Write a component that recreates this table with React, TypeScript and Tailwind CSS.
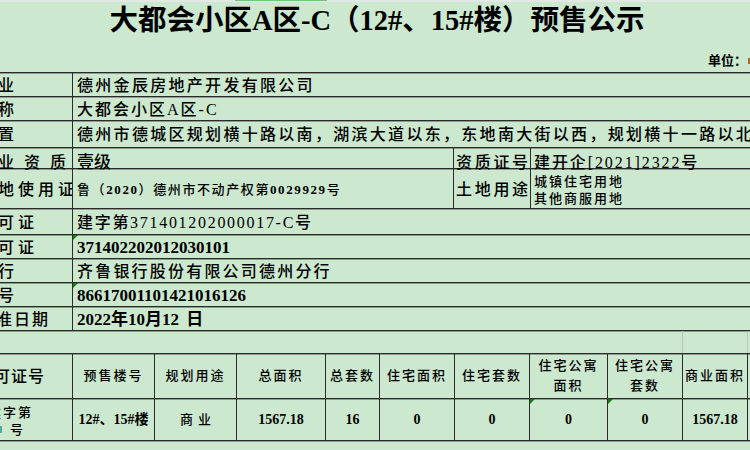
import type { ReactNode } from "react";

// light green sheet, dark rules with a grey line under each
const LINE = "border-t border-[#2b2b2b] shadow-[inset_0_1px_0_#8d9a8e]";

function Marker() {
  return (
    <span className="absolute left-0 top-0 w-0 h-0 border-t-[5px] border-r-[5px] border-t-[#137a13] border-r-transparent" />
  );
}

function InfoRow({
  h,
  label,
  labelCls,
  mark,
  children,
}: {
  h: string;
  label: string;
  labelCls: string;
  mark?: boolean;
  children: ReactNode;
}) {
  return (
    <div className={`flex ${LINE} ${h}`}>
      <div className="w-[72px] shrink-0 overflow-hidden flex items-center pt-[2px] text-[16px] whitespace-nowrap">
        <span className={labelCls}>{label}</span>
      </div>
      <div className="relative flex-1 min-w-0 flex items-center pt-[2px] pl-[4px] border-l border-[#2b2b2b] whitespace-nowrap overflow-hidden">
        {mark && <Marker />}
        {children}
      </div>
    </div>
  );
}

const headCell =
  "relative border-l border-[#2b2b2b] flex items-center justify-center text-center text-[13px] tracking-[2px] leading-[20px] font-medium";
const dataCell =
  "relative border-l border-[#2b2b2b] flex items-center justify-center text-[14px] font-bold";

export default function App() {
  return (
    <div className="w-[750px] h-[450px] overflow-hidden bg-[#cce8cf] text-black font-medium font-['Liberation_Serif','Noto_Sans_CJK_SC',serif]">
      <div className="h-[2px] bg-[#e3e8e4] flex">
        <div className="ml-[235px] w-[92px] h-px bg-[#79c27d]" />
      </div>

      <div className="h-[38px] flex items-center justify-center pl-[4px]">
        <h1 className="text-[28.5px] font-bold leading-none whitespace-nowrap">
          大都会小区A区-C（12#、15#楼）预售公示
        </h1>
      </div>

      <div className="h-[32px] flex items-center justify-end pt-[9px] text-[13px] font-bold">
        <span>单位：</span>
        <span className="ml-[1px] w-[2px] h-[6px] bg-[#b5651d]" />
      </div>

      <InfoRow h="h-[24px]" label="开发企业" labelCls="ml-[-56px] tracking-[2px]">
        <span className="text-[16px] tracking-[2.3px]">德州金辰房地产开发有限公司</span>
      </InfoRow>
      <InfoRow h="h-[24px]" label="项目名称" labelCls="ml-[-56px] tracking-[2px]">
        <span className="text-[16px] tracking-[2px]">大都会小区A区-C</span>
      </InfoRow>
      <InfoRow h="h-[27px]" label="项目位置" labelCls="ml-[-56px] tracking-[2px]">
        <span className="text-[16px] tracking-[2.3px]">
          德州市德城区规划横十路以南，湖滨大道以东，东地南大街以西，规划横十一路以北
        </span>
      </InfoRow>

      <div className={`grid grid-cols-[72px_381px_77px_1fr] h-[21px] ${LINE}`}>
        <div className="overflow-hidden flex items-center pt-[2px] text-[16px] whitespace-nowrap">
          <span className="ml-[-28px] tracking-[10px]">企业资质</span>
        </div>
        <div className="border-l border-[#2b2b2b] flex items-center pt-[2px] pl-[4px] text-[17px]">壹级</div>
        <div className="border-l border-[#2b2b2b] flex items-center pt-[2px] pl-[2px] text-[16px] tracking-[2.7px] whitespace-nowrap">
          资质证号
        </div>
        <div className="border-l border-[#2b2b2b] flex items-center pt-[2px] pl-[3px] text-[16px] tracking-[1.9px] whitespace-nowrap overflow-hidden">
          建开企[2021]2322号
        </div>
      </div>

      <div className={`grid grid-cols-[72px_381px_77px_1fr] h-[40px] ${LINE}`}>
        <div className="overflow-hidden flex items-center pt-[2px] text-[16px] whitespace-nowrap">
          <span className="ml-[-22px] tracking-[4px]">土地使用证</span>
        </div>
        <div className="border-l border-[#2b2b2b] flex items-center pt-[2px] pl-[4px] text-[13px] tracking-[1.6px] whitespace-nowrap">
          鲁（<b>2020</b>）德州市不动产权第<b>0029929</b>号
        </div>
        <div className="border-l border-[#2b2b2b] flex items-center pt-[3px] pl-[2px] text-[16px] tracking-[2.7px] whitespace-nowrap">
          土地用途
        </div>
        <div className="border-l border-[#2b2b2b] flex flex-col justify-center pt-[3px] pl-[3px] text-[13px] tracking-[2px] leading-[17px] whitespace-nowrap">
          <span>城镇住宅用地</span>
          <span>其他商服用地</span>
        </div>
      </div>

      <InfoRow h="h-[26px]" label="规划许可证" labelCls="ml-[-62px] tracking-[4px]">
        <span className="text-[16px] tracking-[1.7px]">建字第371401202000017-C号</span>
      </InfoRow>
      <InfoRow h="h-[24px]" label="施工许可证" labelCls="ml-[-62px] tracking-[4px]" mark>
        <span className="text-[17px] font-bold">371402202012030101</span>
      </InfoRow>
      <InfoRow h="h-[24px]" label="监管银行" labelCls="ml-[-56px] tracking-[2px]">
        <span className="text-[16px] tracking-[2.2px]">齐鲁银行股份有限公司德州分行</span>
      </InfoRow>
      <InfoRow h="h-[24px]" label="监管账号" labelCls="ml-[-56px] tracking-[2px]" mark>
        <span className="text-[17px] font-bold">86617001101421016126</span>
      </InfoRow>
      <InfoRow h="h-[24px]" label="批准日期" labelCls="ml-[-22px] tracking-[2px]">
        <span className="text-[17px] font-bold">
          2022年10月12 <span className="ml-[3px]">日</span>
        </span>
      </InfoRow>

      <div className={`grid grid-cols-[682px_65px_1fr] h-[23px] ${LINE}`}>
        <div />
        <div className="border-l border-[#b6c9b8]" />
        <div className="border-l border-[#b6c9b8]" />
      </div>

      <div className={`grid grid-cols-[72px_82px_82px_89px_54px_75px_75px_78px_75px_65px_1fr] h-[45px] ${LINE}`}>
        <div className="overflow-hidden flex items-center pt-[1px] text-[16px] whitespace-nowrap">
          <span className="ml-[-23px] tracking-[1px]">许可证号</span>
        </div>
        <div className={headCell}>预售楼号</div>
        <div className={headCell}>规划用途</div>
        <div className={headCell}>总面积</div>
        <div className={headCell}>总套数</div>
        <div className={headCell}>住宅面积</div>
        <div className={headCell}>住宅套数</div>
        <div className={headCell}>
          住宅公寓
          <br />
          面积
        </div>
        <div className={headCell}>
          住宅公寓
          <br />
          套数
        </div>
        <div className={headCell}>商业面积</div>
        <div className="border-l border-[#2b2b2b]" />
      </div>

      <div className={`grid grid-cols-[72px_82px_82px_89px_54px_75px_75px_78px_75px_65px_1fr] h-[42px] ${LINE}`}>
        <div className="overflow-hidden flex flex-col justify-center pt-[2px] text-[13px] tracking-[2px] leading-[17px] whitespace-nowrap">
          <span className="ml-[-12px]">建字第</span>
          <span className="flex items-center">
            <span className="w-[2px] h-[7px] bg-[#5aa7a0]" />
            <span className="ml-[8px]">号</span>
          </span>
        </div>
        <div className={dataCell}>12#、15#楼</div>
        <div className={`${dataCell} pl-[5px]`}>
          <span className="text-[13px] font-medium tracking-[5px]">商业</span>
        </div>
        <div className={dataCell}>1567.18</div>
        <div className={dataCell}>16</div>
        <div className={dataCell}>0</div>
        <div className={dataCell}>0</div>
        <div className={dataCell}>
          <Marker />0
        </div>
        <div className={dataCell}>
          <Marker />0
        </div>
        <div className={dataCell}>1567.18</div>
        <div className="border-l border-[#2b2b2b]" />
      </div>

      <div className={`h-[10px] ${LINE}`} />
    </div>
  );
}
